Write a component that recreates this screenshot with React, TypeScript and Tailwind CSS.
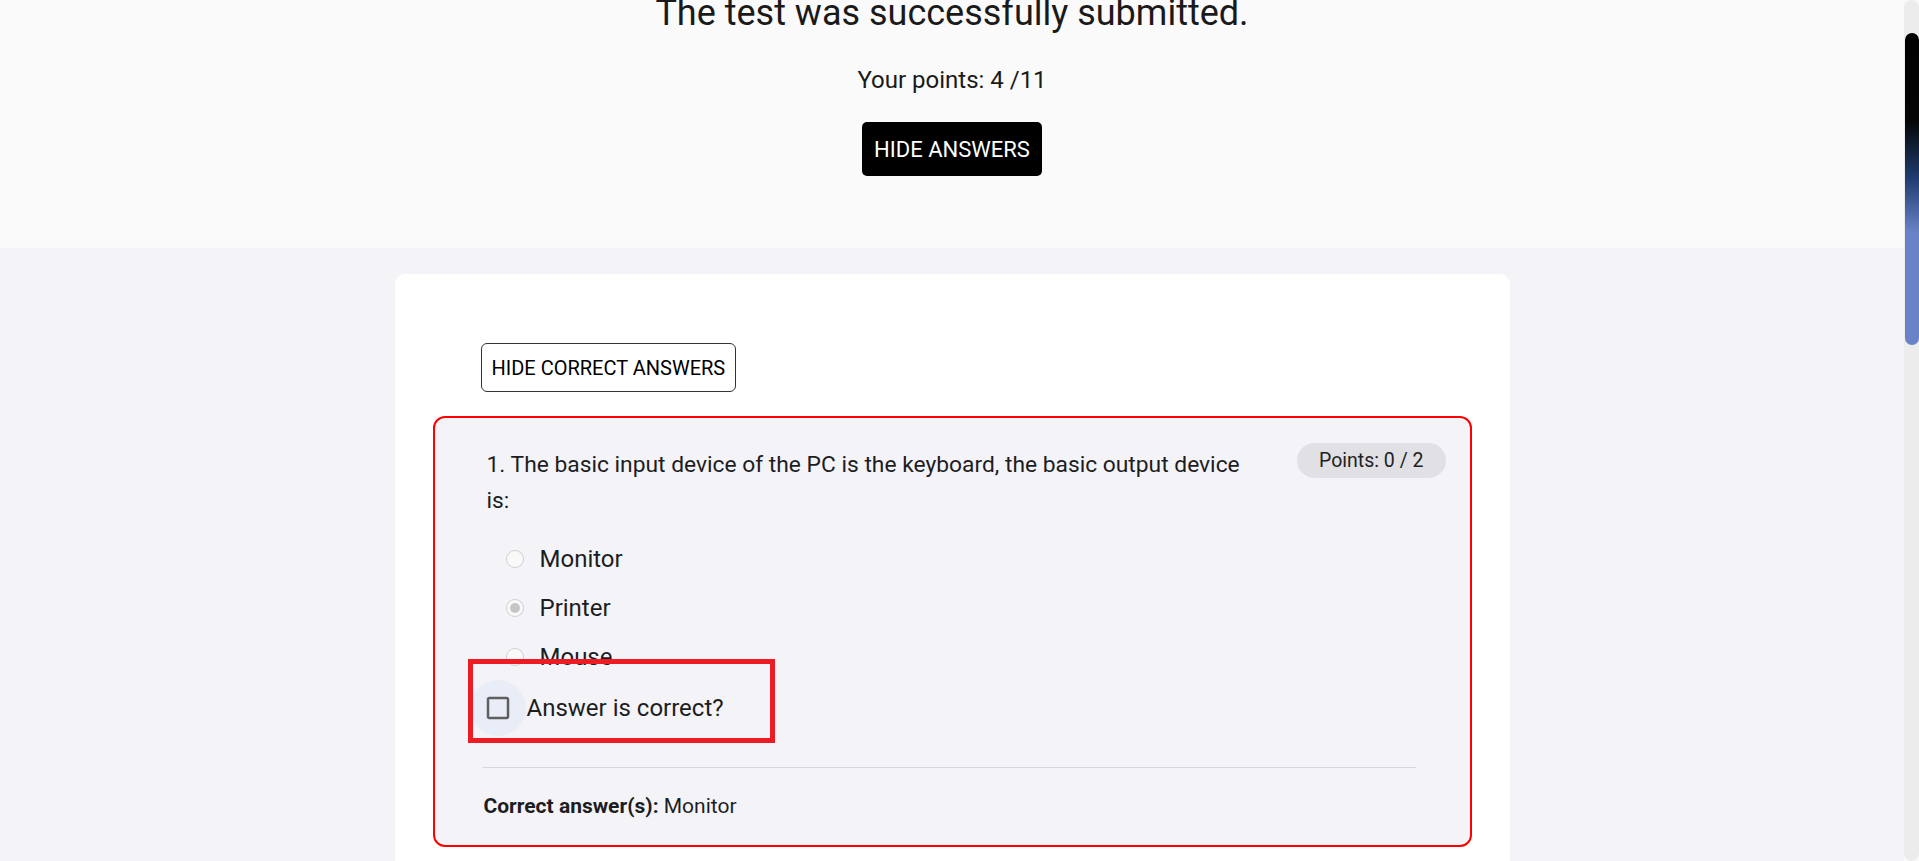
import React from 'react'

const OPTIONS = [
  { label: 'Monitor', checked: false },
  { label: 'Printer', checked: true },
  { label: 'Mouse', checked: false },
]

function Radio({ checked }: { checked: boolean }) {
  return (
    <span className="flex h-[18px] w-[18px] shrink-0 items-center justify-center rounded-full border-[1.5px] border-[#cfcfcf] bg-[#f9f9f9]">
      {checked && <span className="h-[10px] w-[10px] rounded-full bg-[#c6c6c6]" />}
    </span>
  )
}

function CheckboxBlank() {
  return (
    <span className="relative flex h-[30px] w-[30px] items-center justify-center">
      {/* hover ripple */}
      <span className="absolute left-[-13px] top-[-13px] h-[56px] w-[56px] rounded-full bg-[#e9edf7]" />
      <svg viewBox="0 0 24 24" className="relative h-[30px] w-[30px] fill-[#5f5f5f]">
        <path d="M19 5v14H5V5h14m0-2H5c-1.1 0-2 .9-2 2v14c0 1.1.9 2 2 2h14c1.1 0 2-.9 2-2V5c0-1.1-.9-2-2-2z" />
      </svg>
    </span>
  )
}

export default function App() {
  return (
    <div className="flex h-screen w-full overflow-hidden font-[Roboto,sans-serif] text-[#1d1d1f]">
      <div className="flex min-w-0 flex-1 flex-col overflow-hidden bg-[#f4f4f8]">
        {/* Result header */}
        <div className="flex h-[248px] shrink-0 flex-col items-center bg-[#fafafa]">
          <h1 className="mt-[-8px] text-[36px] leading-[42px] font-normal text-[#1a1a1a]">
            The test was successfully submitted.
          </h1>
          <p className="mt-[32px] text-[24px] leading-[28px] text-[#1a1a1a]">Your points: 4 /11</p>
          <button className="mt-[28px] h-[54px] rounded-[5px] bg-black px-[12px] text-[22px] uppercase text-white">
            Hide answers
          </button>
        </div>

        {/* Answers */}
        <div className="mt-[26px] flex shrink-0 justify-center">
          <div className="w-[1115px] rounded-[10px] bg-white px-[38px] pt-[69px] pb-[40px]">
            <button className="ml-[48px] h-[49px] rounded-[6px] border border-[#333] bg-white px-[10px] text-[20px] uppercase text-black">
              Hide correct answers
            </button>

            <div className="relative mt-[24px] rounded-[12px] border-2 border-[#ff0000] bg-[#f4f4f8] pl-[48px] pr-[24px] pt-[25px] pb-[24px]">
              <div className="flex items-start justify-between">
                <p className="mt-[4px] w-[765px] pl-[4px] text-[22.8px] leading-[36px]">
                  1. The basic input device of the PC is the keyboard, the basic output device is:
                </p>
                <span className="flex h-[35px] items-center rounded-full bg-[#e1e0e5] px-[22px] text-[19.5px] text-[#222]">
                  Points: 0 / 2
                </span>
              </div>

              <div className="mt-[15px] flex flex-col">
                {OPTIONS.map((o) => (
                  <label key={o.label} className="flex h-[49px] items-center gap-[16px] pl-[23px]">
                    <Radio checked={o.checked} />
                    <span className="text-[24px]">{o.label}</span>
                  </label>
                ))}
              </div>

              <div className="flex h-[54px] items-center gap-[14px]">
                <CheckboxBlank />
                <span className="text-[24px]">Answer is correct?</span>
              </div>

              <div className="mr-[30px] mt-[32px] h-px bg-[#d6d6da]" />

              <p className="mt-[23px] pl-[1px] text-[21px] leading-[30px]">
                <span className="font-bold">Correct answer(s):</span> Monitor
              </p>

              {/* annotation frame */}
              <div className="pointer-events-none absolute left-[33px] top-[241px] h-[84px] w-[307px] border-[5px] border-[#ed1c24]" />
            </div>
          </div>
        </div>
      </div>

      {/* scrollbar */}
      <div className="flex w-[15px] shrink-0 bg-[#fafafa]">
        <div className="flex h-full w-[15px] flex-col items-center rounded-full bg-[#ececec]">
          <div className="mt-[33px] h-[312px] w-[14px] rounded-full bg-[linear-gradient(180deg,#000_0%,#050505_28%,#1d3b6d_46%,#6a83c8_64%,#6a83c8_100%)]" />
        </div>
      </div>
    </div>
  )
}
